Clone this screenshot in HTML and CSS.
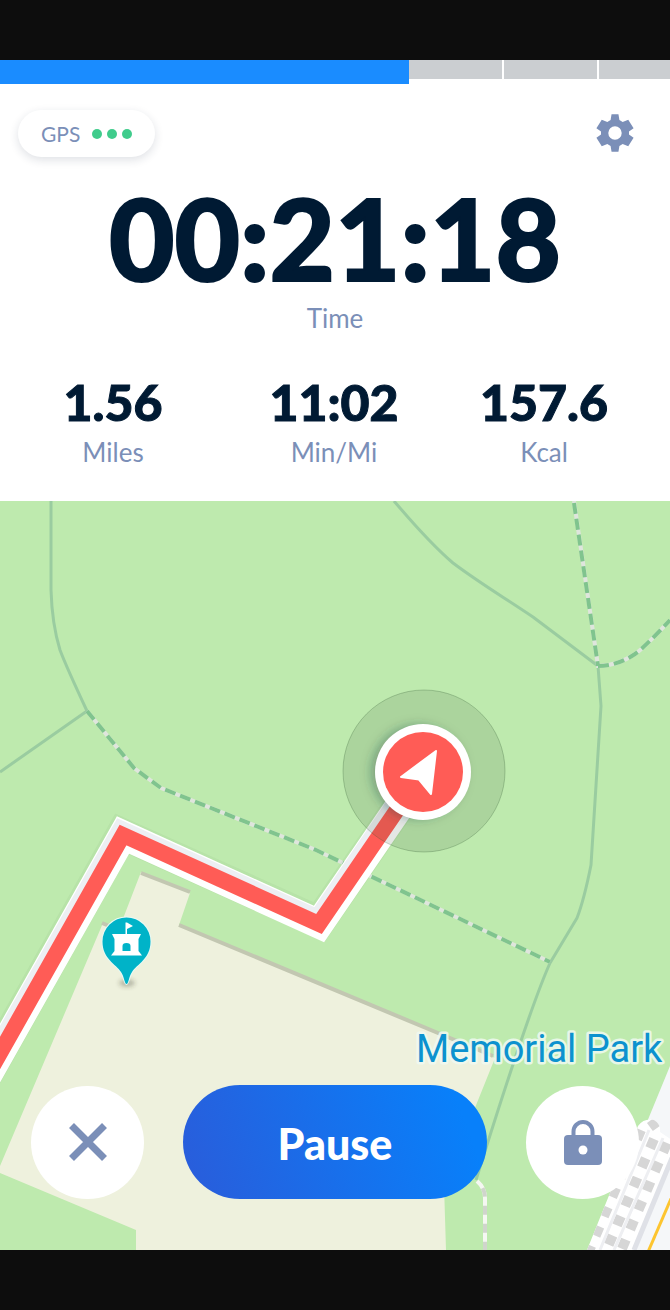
FILE: index.html
```
<!DOCTYPE html>
<html lang="en">
<head>
<meta charset="utf-8">
<meta name="viewport" content="width=device-width, initial-scale=1">
<title>Run in progress</title>
<link rel="stylesheet" href="styles.css">
</head>
<body>
<div class="app">
  <div class="system-bar"></div>
  <div class="progress" role="progressbar" aria-label="Workout progress" aria-valuemin="0" aria-valuemax="100" aria-valuenow="61">
    <div class="progress-fill" style="width: 61.1%"></div>
    <div class="progress-rest">
      <span class="segment"></span>
      <span class="segment"></span>
      <span class="segment last"></span>
    </div>
  </div>
  <header class="toolbar">
    <div class="gps">
      <span class="gps-label">GPS</span>
      <span class="dots"><i class="dot"></i><i class="dot"></i><i class="dot"></i></span>
    </div>
    <button class="settings" type="button" aria-label="Settings">
      <svg class="gear" viewBox="0 0 24 24"><path d="M10.200 2.200H13.800L14.300 5.200L16 6.200L18.900 5.100L21.700 9.500L19.300 11.200V12.800L21.700 14.500L18.900 18.900L16 17.800L14.300 18.800L13.800 21.800H10.200L9.700 18.800L8 17.800L5.100 18.900L2.300 14.500L4.700 12.800V11.200L2.300 9.500L5.100 5.100L8 6.200L9.700 5.200ZM12 15.500a3.500 3.500 0 1 0 0-7 3.500 3.500 0 0 0 0 7z"/></svg>
    </button>
  </header>
  <main class="workout">
    <section class="timer">
      <div class="time-value">00:21:18</div>
      <div class="caption">Time</div>
    </section>
    <section class="stats">
      <div class="stat"><div class="stat-value">1.56</div><div class="caption">Miles</div></div>
      <div class="stat"><div class="stat-value">11:02</div><div class="caption">Min/Mi</div></div>
      <div class="stat"><div class="stat-value">157.6</div><div class="caption">Kcal</div></div>
    </section>
    <section class="map" aria-label="Route map">
      <svg class="map-art" viewBox="0 501 670 749" preserveAspectRatio="xMidYMid slice">
        <defs>
          <filter id="soft" x="-50%" y="-50%" width="200%" height="200%"><feGaussianBlur stdDeviation="6"/></filter>
          <filter id="small-soft" x="-50%" y="-50%" width="200%" height="200%"><feGaussianBlur stdDeviation="2"/></filter>
          <clipPath id="rail-area"><path d="M638 1126Q644 1118 654 1120Q661 1124 660 1132L672 1140V1154L632 1250H587L612 1188Z"/></clipPath>
        </defs>
        <rect y="501" width="670" height="749" class="park"/>
        <!-- building -->
        <path class="building" d="M141 872L190 893L179 925L438 1033L495 1058L444 1185L446 1250H136V1230L0 1173V1166L103 923L119 929Z"/>
        <path class="wall" d="M141 873L190 892M179 925L438 1033L493 1056M102 923L114 928"/>
        <!-- road and railway at the lower right corner -->
        <path class="road" d="M670 1066L647 1122V1180L620 1250H670Z"/>
        <g clip-path="url(#rail-area)">
          <path class="rail-bed" d="M580 1110H680V1250H580Z"/>
          <path class="rail-ties" d="M641 1130L586 1258M654 1139L603 1258M667 1143L618 1258"/>
          <path class="rail-line" d="M649 1130L600 1250M663 1138L614 1250"/>
          <path class="rail-ties" d="M651 1120L659 1131"/>
        </g>
        <path class="rail-edge" d="M672 1158L634 1250"/>
        <path class="yellow-road" d="M673 1194L648 1252"/>
        <!-- paths -->
        <path class="trail" d="M51 501V590Q52 624 60 650Q66 666 87 711L0 772M394 501C416 527 432 545 453 563C481 584 505 598 533 617L598 666L601 706L591 865Q584 900 577 918L550 963Q529 1010 476 1180"/>
        <path class="dash-light" d="M87 711L134 768Q150 780 161 788L316 850L550 962M574 501L598 666Q617 666 635 654Q645 647 670 620"/>
        <path class="dash-green" d="M87 711L134 768Q150 780 161 788L316 850L550 962M598 666Q617 666 635 654Q645 647 670 620M574 503L598 666"/>
        <path class="walk-light" d="M477 1181Q485 1188 485 1198V1250"/>
        <path class="walk-gray" d="M477 1181Q485 1188 485 1198V1250"/>
        <!-- route -->
        <path class="route-shadow" d="M-22 1090L122 834L319 922L423 772"/>
        <path class="route-case" d="M-22 1092L123 835L319 924L423 772"/>
        <path class="route-shade" d="M-31 1087L118.500 822L315.500 911L414 766"/>
        <path class="route" d="M-22 1092L123 835L319 924L423 772"/>
        <circle class="accuracy" cx="424" cy="771" r="81"/>
        <circle class="marker-shadow" cx="418" cy="772" r="46" filter="url(#soft)"/>
        <circle class="marker-ring" cx="423" cy="772" r="48"/>
        <circle class="marker" cx="423" cy="772" r="40"/>
        <path class="arrow" d="M436 751L401 777L419 779.500L431 794Z"/>
        <!-- castle pin -->
        <ellipse class="pin-shadow" cx="127" cy="983" rx="8" ry="4" filter="url(#small-soft)"/>
        <path class="pin" d="M126.500 917.500A24 24 0 0 0 102.500 941.500C102.500 959 116 964 121 972C124 976 124.500 984 126.500 984S129 976 132 972C137 964 150.500 959 150.500 941.500A24 24 0 0 0 126.500 917.500Z"/>
        <path class="castle" d="M125.500 922.500H127L133 926L127 929V934H141L138.500 939V951L142 955.500H111L114.500 951V939L112 934H125.500Z"/>
        <path class="castle-door" d="M122.500 951V946Q122.500 943 126.500 943T130.500 946V951Z"/>
        <text class="place" x="416" y="1062">Memorial Park</text>
      </svg>
      <div class="controls">
        <button class="round" type="button" aria-label="Stop"><svg class="control-icon" viewBox="0 0 48 48"><path class="cross" d="M7.500 7.500L40.500 40.500M40.500 7.500L7.500 40.500"/></svg></button>
        <button class="pause" type="button">Pause</button>
        <button class="round" type="button" aria-label="Lock"><svg class="control-icon" viewBox="0 0 48 48"><path class="shackle" d="M14.500 19V13.500A9.500 9.500 0 0 1 33.500 13.500V19"/><rect class="lock-body" x="5" y="17" width="38" height="30" rx="4"/><circle class="keyhole" cx="24" cy="32" r="4.500"/></svg></button>
      </div>
    </section>
  </main>
  <div class="system-bar"></div>
</div>
</body>
</html>
```
FILE: styles.css
```
* { box-sizing: border-box; }
body { margin: 0; background: #fff; font-family: Lato, "Open Sans", sans-serif; color: #001a33; }
button { border: 0; padding: 0; font: inherit; cursor: pointer; }
.app { display: flex; flex-direction: column; min-height: 100vh; }
.system-bar { flex: none; height: 60px; background: #0d0d0d; }
.progress { display: flex; height: 24px; }
.progress-fill { background: #1a8cff; }
.progress-rest { flex: 1; display: flex; gap: 2px; height: 19px; }
.segment { flex: 93; background: #cbced1; }
.last { flex: 71; }
.toolbar { display: flex; justify-content: space-between; align-items: flex-start; padding: 26px 32px 0 18px; }
.gps { display: flex; align-items: center; gap: 12px; height: 47px; padding: 0 23px; border-radius: 24px; background: #fff; box-shadow: 0 3px 10px rgba(30, 40, 70, .14); }
.gps-label { font-size: 21px; color: #7b8fb8; }
.dots { display: flex; gap: 5px; }
.dot { width: 10px; height: 10px; border-radius: 50%; background: #40cc8c; }
.settings { width: 46px; height: 46px; background: none; }
.gear { display: block; width: 46px; height: 46px; fill: #7b8fb8; }
.workout { flex: 1; display: flex; flex-direction: column; }
.timer { padding-top: 20px; text-align: center; }
.time-value { font-size: 113px; line-height: 120px; font-weight: 900; -webkit-text-stroke: 2px #001a33; }
.caption { font-size: 26px; line-height: 32px; color: #7b8fb8; text-align: center; }
.timer .caption { margin-top: 5px; }
.stats { display: grid; grid-template-columns: 226fr 216fr 204fr; padding: 36px 24px 33px 0; }
.stat { display: flex; flex-direction: column; gap: 2px; }
.stat-value { font-size: 50px; line-height: 64px; font-weight: 900; text-align: center; -webkit-text-stroke: 1px #001a33; }
.map { position: relative; flex: 1; min-height: 400px; display: flex; align-items: flex-end; overflow: hidden; background: #beeaae; }
.map-art { position: absolute; inset: 0; width: 100%; height: 100%; }
.park { fill: #beeaae; }
.building { fill: #eef1dd; }
.wall { fill: none; stroke: #c2c7b1; stroke-width: 4; }
.road { fill: #f5f7f9; }
.rail-bed { fill: #fff; }
.rail-ties { fill: none; stroke: #d6d6d6; stroke-width: 10; stroke-dasharray: 10 11; }
.rail-line { fill: none; stroke: #eeeff2; stroke-width: 3; }
.rail-edge { fill: none; stroke: #dfe1e7; stroke-width: 5; }
.yellow-road { fill: none; stroke: #fdc530; stroke-width: 3; }
.trail { fill: none; stroke: #9acca0; stroke-width: 3; stroke-linejoin: round; }
.dash-light { fill: none; stroke: #dfe5dd; stroke-width: 4; }
.dash-green { fill: none; stroke: #80c48e; stroke-width: 4; stroke-dasharray: 11 5; }
.walk-light { fill: none; stroke: #f5f7f2; stroke-width: 4; }
.walk-gray { fill: none; stroke: #d0d5cc; stroke-width: 4; stroke-dasharray: 9 9; stroke-dashoffset: 9; }
.route-shadow { fill: none; stroke: rgba(60, 90, 60, .05); stroke-width: 32; }
.route-case { fill: none; stroke: #fff; stroke-width: 29; }
.route-shade { fill: none; stroke: #edeff3; stroke-width: 6; }
.route { fill: none; stroke: #ff5c56; stroke-width: 16; }
.accuracy { fill: rgba(50, 70, 50, .13); stroke: rgba(50, 90, 50, .28); stroke-width: 1; }
.marker-shadow { fill: rgba(20, 60, 60, .4); }
.marker-ring { fill: #fff; }
.marker { fill: #ff5c56; }
.arrow { fill: #fff; stroke: #fff; stroke-width: 2; stroke-linejoin: round; }
.pin-shadow { fill: rgba(60, 60, 40, .3); }
.pin { fill: #00b3c8; stroke: #e9faf5; stroke-width: 2; paint-order: stroke; }
.castle { fill: #fff; }
.castle-door { fill: #00b3c8; }
.place { font: 38px Roboto, sans-serif; fill: #0c92cf; stroke: rgba(240, 250, 242, .85); stroke-width: 5; stroke-linejoin: round; paint-order: stroke; }
.controls { position: relative; flex: 1; display: flex; align-items: center; justify-content: space-between; gap: 39px; padding: 0 31px 51px; }
.round { flex: none; display: flex; align-items: center; justify-content: center; width: 113px; height: 113px; border-radius: 50%; background: #fff; }
.control-icon { width: 48px; height: 48px; }
.cross { fill: none; stroke: #7b8fb8; stroke-width: 7; }
.shackle { fill: none; stroke: #7b8fb8; stroke-width: 4; }
.lock-body { fill: #7b8fb8; }
.keyhole { fill: #fff; }
.pause { flex: 1; height: 114px; padding-top: 4px; border-radius: 57px; background: linear-gradient(70deg, #2a5cda, #0880fa 90%); color: #fff; font-size: 43px; line-height: 54px; font-weight: 900; }
```
